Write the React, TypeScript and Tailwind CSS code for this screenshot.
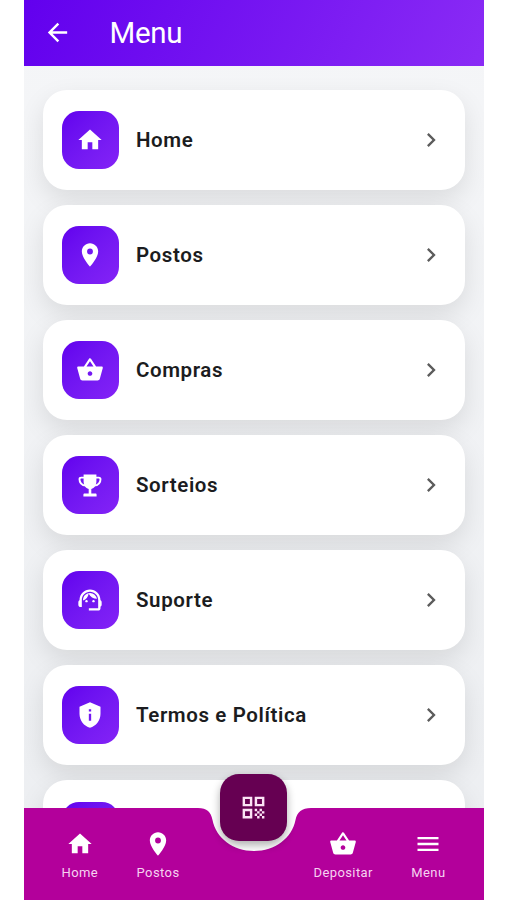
import type { ComponentType } from "react";
import {
  MdArrowBack,
  MdChevronRight,
  MdHome,
  MdMenu,
  MdPlace,
  MdPrivacyTip,
  MdQrCode,
  MdShoppingBasket,
  MdSupportAgent,
} from "react-icons/md";

type MenuItem = {
  label: string;
  icon: ComponentType<{ className?: string }>;
};

function TrophyIcon({ className }: { className?: string }) {
  return (
    <svg className={className} viewBox="0 0 28 28" fill="none">
      <path
        d="M8.5 6.6H5.2C4 6.6 3.5 7.2 3.5 8.2C3.5 12 5.6 14.2 10 14.6M19.5 6.6H22.8C24 6.6 24.5 7.2 24.5 8.2C24.5 12 22.4 14.2 18 14.6"
        stroke="currentColor"
        strokeWidth="1.9"
      />
      <path
        d="M7.6 3.4H20.4V10C20.4 14.2 18.4 17.2 15.3 17.9V22.6H19.4C20.2 22.6 20.6 23 20.6 23.8V25.6H7.4V23.8C7.4 23 7.8 22.6 8.6 22.6H12.7V17.9C9.6 17.2 7.6 14.2 7.6 10Z"
        fill="currentColor"
      />
    </svg>
  );
}

const MENU_ITEMS: MenuItem[] = [
  { label: "Home", icon: MdHome },
  { label: "Postos", icon: MdPlace },
  { label: "Compras", icon: MdShoppingBasket },
  { label: "Sorteios", icon: TrophyIcon },
  { label: "Suporte", icon: MdSupportAgent },
  { label: "Termos e Política", icon: MdPrivacyTip },
  { label: "Sair", icon: MdHome },
];

const NAV_LEFT: MenuItem[] = [
  { label: "Home", icon: MdHome },
  { label: "Postos", icon: MdPlace },
];

const NAV_RIGHT: MenuItem[] = [
  { label: "Depositar", icon: MdShoppingBasket },
  { label: "Menu", icon: MdMenu },
];

function MenuCard({ label, icon: Icon }: MenuItem) {
  return (
    <button className="flex h-[100.5px] w-full shrink-0 items-center rounded-[24px] bg-white pr-5 pl-[19px] text-left shadow-[0_10px_26px_0_rgba(0,0,0,0.10)]">
      <span className="flex size-[57.5px] items-center justify-center rounded-[17px] bg-linear-to-br from-[#6200EE] to-[#8423F6] text-white">
        <Icon className="size-[28px]" />
      </span>
      <span className="ml-[17px] flex-1 pt-px text-[20.5px] font-semibold tracking-[0.6px] text-[#1B1C20]">{label}</span>
      <MdChevronRight className="size-[28px] text-[#5C5C5C]" />
    </button>
  );
}

function NavItem({ label, icon: Icon }: MenuItem) {
  return (
    <button className="flex flex-col items-center gap-[7px] text-white">
      <Icon className="size-[28px]" />
      <span className="text-[13px] leading-[16px] tracking-[0.4px] text-[#F6D3F1]">{label}</span>
    </button>
  );
}

export default function App() {
  return (
    <div className="h-[900px] w-full overflow-hidden bg-white font-['Roboto',sans-serif]">
      <div className="relative ml-[23.5px] flex h-full w-[460px] flex-col overflow-hidden bg-linear-to-b from-[#F5F6F8] to-[#ECEEF1]">
        <header className="flex h-[65.5px] shrink-0 items-center bg-linear-[115deg] from-[#6200EE] to-[#8A2BF5] pl-[19px] text-white">
          <MdArrowBack className="size-[29px]" />
          <h1 className="ml-[38px] text-[29.5px] font-normal tracking-[-0.3px]">Menu</h1>
        </header>

        <main className="flex flex-1 flex-col gap-[14.6px] overflow-hidden px-[19px] pt-[24px]">
          {MENU_ITEMS.map((item) => (
            <MenuCard key={item.label} {...item} />
          ))}
        </main>

        {/* barra inferior com recorte para o botão de QR */}
        <nav className="absolute inset-x-0 bottom-0 h-[92px]">
          <svg className="absolute inset-0" width="460" height="92" viewBox="0 0 460 92">
            <path
              d="M0 0H174C183 0 187 4 188.5 12C192 30 209 43 230 43C251 43 268 30 271.5 12C273 4 278 0 287 0H460V92H0Z"
              fill="#B3009B"
            />
          </svg>
          <div className="relative flex h-full justify-between pt-[22px]">
            <div className="flex w-[170px] justify-between pr-[14px] pl-[38px]">
              {NAV_LEFT.map((item) => (
                <NavItem key={item.label} {...item} />
              ))}
            </div>
            <div className="flex w-[170px] justify-between pr-[38px]">
              {NAV_RIGHT.map((item) => (
                <NavItem key={item.label} {...item} />
              ))}
            </div>
          </div>
        </nav>

        <button className="absolute bottom-[59px] left-[196.5px] flex size-[67px] items-center justify-center rounded-[19px] bg-[#660052] text-[#FBE3F5] shadow-[0_4px_9px_0_rgba(0,0,0,0.32)]">
          <MdQrCode className="size-[29px]" />
        </button>
      </div>
    </div>
  );
}
